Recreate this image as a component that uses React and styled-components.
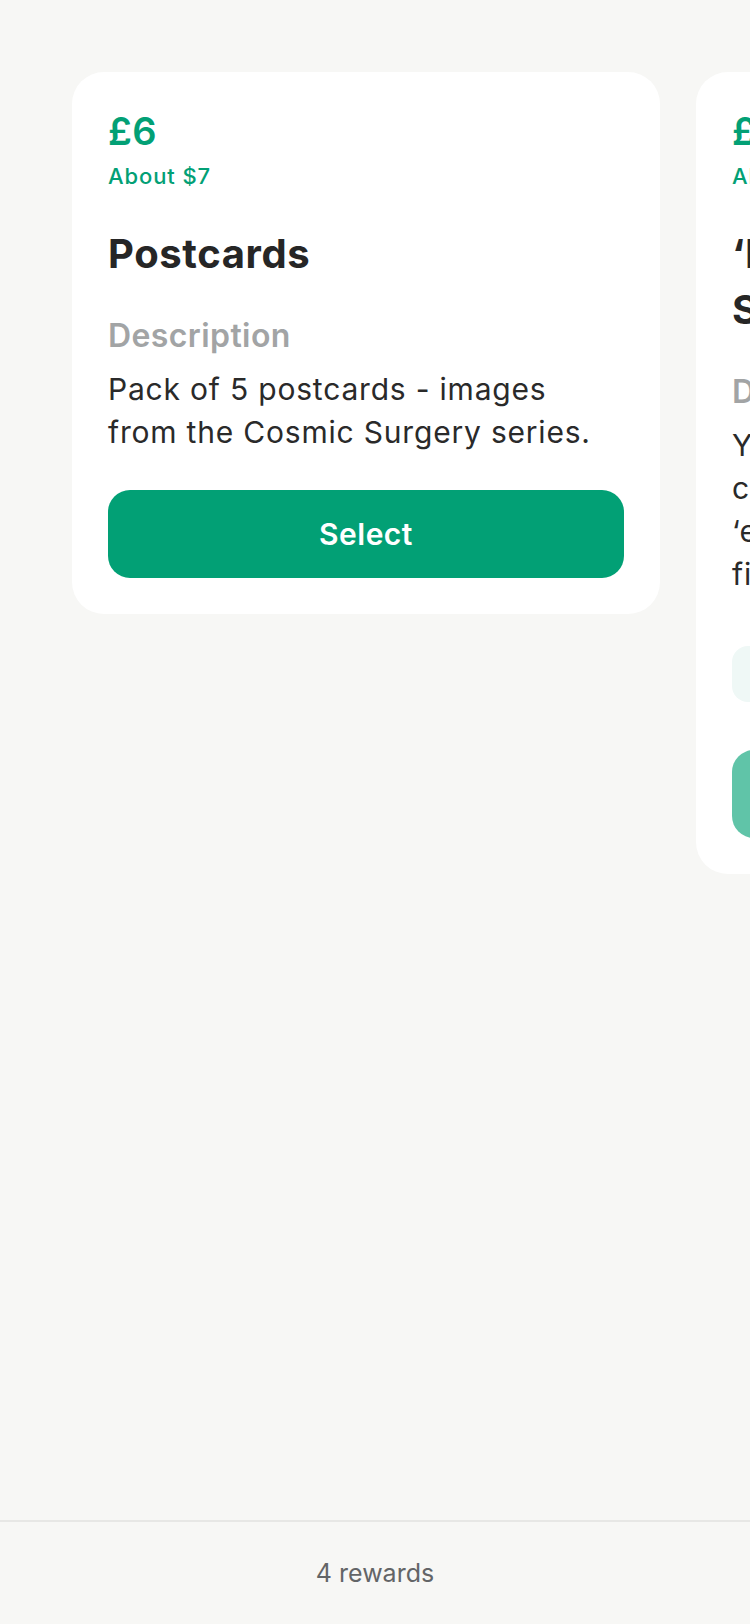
import React from 'react';
import styled, { createGlobalStyle } from 'styled-components';

const GlobalStyle = createGlobalStyle`
    html, body, #root {
        height: 100%;
        margin: 0;
    }
    body {
        background: #f7f7f5;
        font-family: Inter, "Noto Sans", "Liberation Sans", sans-serif;
        overflow: hidden;
    }
`;

// Whole screen: carousel on top, footer pinned at the bottom
const Page = styled.div`
    display: flex;
    flex-direction: column;
    height: 100%;
`;

const Carousel = styled.div`
    flex: 1;
    display: flex;
    align-items: flex-start;
    gap: 36px;
    padding: 72px 0 0 72px;
    overflow: hidden;
`;

const Card = styled.div`
    flex: 0 0 588px;
    box-sizing: border-box;
    padding: 36px;
    background: #ffffff;
    border-radius: 32px;
    display: flex;
    flex-direction: column;
`;

const Price = styled.div`
    color: #02a075;
    font-size: 38px;
    line-height: 46px;
    font-weight: 600;
    letter-spacing: 0.4px;
`;

const Converted = styled.div`
    margin-top: 8px;
    color: #02a075;
    font-size: 22px;
    line-height: 28px;
    font-weight: 500;
    letter-spacing: 0.9px;
`;

const Title = styled.h2`
    margin: 36px 0 0;
    color: #262626;
    font-size: 40px;
    line-height: 56px;
    font-weight: 700;
    letter-spacing: 0.6px;
`;

const Label = styled.div`
    margin-top: 34px;
    color: #a2a4a5;
    font-size: 32px;
    line-height: 40px;
    font-weight: 600;
    letter-spacing: 0.4px;
`;

const Body = styled.p`
    margin: 12px 0 0;
    color: #2a2a2a;
    font-size: 30px;
    line-height: 43px;
    font-weight: 400;
    letter-spacing: 0.8px;
`;

const Notice = styled.div`
    margin-top: 50px;
    height: 56px;
    border-radius: 16px;
    background: #eff8f6;
    display: flex;
    align-items: center;
    padding: 0 24px;
    color: #02a075;
    font-size: 24px;
    font-weight: 500;
`;

const SelectButton = styled.button`
    margin-top: ${props => (props.$after ? '48px' : '36px')};
    height: 88px;
    border: none;
    border-radius: 22px;
    background: ${props => (props.$disabled ? '#60c4a8' : '#02a075')};
    color: #ffffff;
    font-family: inherit;
    font-size: 30px;
    font-weight: 600;
    letter-spacing: 0.5px;
    cursor: pointer;
`;

const Footer = styled.div`
    flex: 0 0 102px;
    border-top: 2px solid #e7e7e5;
    display: flex;
    align-items: center;
    justify-content: center;
    color: #636567;
    font-size: 25px;
`;

export default function App() {
    return (
        <Page>
            <GlobalStyle />
            <Carousel>
                <Card>
                    <Price>£6</Price>
                    <Converted>About $7</Converted>
                    <Title>Postcards</Title>
                    <Label>Description</Label>
                    <Body>Pack of 5 postcards - images from the Cosmic Surgery series.</Body>
                    <SelectButton>Select</SelectButton>
                </Card>
                <Card>
                    <Price>£25</Price>
                    <Converted>About $31</Converted>
                    <Title>‘Interdimensional Surgeon’ Print</Title>
                    <Label>Description</Label>
                    <Body>
                        You will receive a high quality A3<br />
                        copy of the artwork titled<br />
                        ‘exploration’, printed on the<br />
                        finest archival paper.
                    </Body>
                    <Notice>Limited (12 left of 50)</Notice>
                    <SelectButton $after $disabled>Select</SelectButton>
                </Card>
            </Carousel>
            <Footer>4 rewards</Footer>
        </Page>
    );
}
